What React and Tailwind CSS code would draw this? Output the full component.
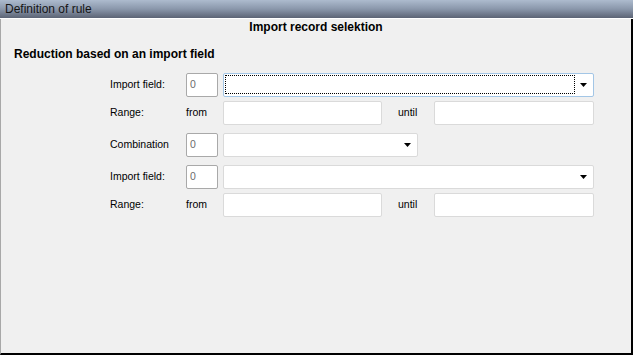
import React from "react";

const font = { fontFamily: '"Liberation Sans", Arial, sans-serif' };

function Arrow() {
  return (
    <svg width="7" height="4" viewBox="0 0 7 4" className="block">
      <path d="M0 0 H7 L3.5 4 Z" fill="#000" />
    </svg>
  );
}

function NumBox() {
  return (
    <div className="w-[32px] h-[24px] bg-white border border-[#a9a9a9] rounded-[2px] flex items-center pl-[3px] text-[10.5px] text-[#6d6d6d]">
      0
    </div>
  );
}

function Combo({ width, focused }) {
  return (
    <div
      className={`h-[24px] bg-white border rounded-[2px] relative flex items-center justify-end pr-[6px] ${
        focused ? "border-[#a3c6e6]" : "border-[#dadada]"
      }`}
      style={{ width }}
    >
      {focused && (
        <div className="absolute left-[1px] top-[1px] bottom-[2px] right-[18px] border border-dotted border-black" />
      )}
      <Arrow />
    </div>
  );
}

function TextBox({ width }) {
  return (
    <div
      className="h-[24px] bg-white border border-[#dadada] rounded-[2px]"
      style={{ width }}
    />
  );
}

function Label({ children, w }) {
  return (
    <div className="shrink-0 text-[10.5px] text-black" style={{ width: w }}>
      {children}
    </div>
  );
}

function FieldRow({ focused }) {
  return (
    <div className="flex items-center pl-[109px]">
      <Label w={76}>Import field:</Label>
      <NumBox />
      <div className="w-[5px]" />
      <Combo width={371} focused={focused} />
    </div>
  );
}

function RangeRow() {
  return (
    <div className="flex items-center pl-[109px]">
      <Label w={76}>Range:</Label>
      <Label w={37}>from</Label>
      <TextBox width={159} />
      <div className="w-[52px] pl-[16px] text-[10.5px] text-black shrink-0">until</div>
      <TextBox width={160} />
    </div>
  );
}

export default function App() {
  return (
    <div className="w-[633px] h-[355px] flex flex-col bg-[#f0f0f0]" style={font}>
      <div className="h-[18px] shrink-0 bg-gradient-to-b from-[#adbbce] via-[#8a97ab] to-[#5c6475] flex items-center pl-[5px] text-[12px] text-[#151515]">
        Definition of rule
      </div>
      <div className="h-[1px] shrink-0 bg-white" />
      <div className="flex-1 flex flex-col border-l border-l-[#a8a8a8] border-r-2 border-r-black border-b-2 border-b-black">
        <div className="h-[16px] leading-[16px] text-center text-[12px] font-bold text-black">
          Import record selektion
        </div>
        <div className="h-[16px] leading-[16px] text-[12px] font-bold text-black pl-[13px] mt-[11px]">
          Reduction based on an import field
        </div>
        <div className="mt-[11px] flex flex-col">
          <FieldRow focused />
          <div className="h-[4px]" />
          <RangeRow />
          <div className="h-[8px]" />
          <div className="flex items-center pl-[109px]">
            <Label w={76}>Combination</Label>
            <NumBox />
            <div className="w-[5px]" />
            <Combo width={195} />
          </div>
          <div className="h-[8px]" />
          <FieldRow />
          <div className="h-[4px]" />
          <RangeRow />
        </div>
      </div>
    </div>
  );
}
